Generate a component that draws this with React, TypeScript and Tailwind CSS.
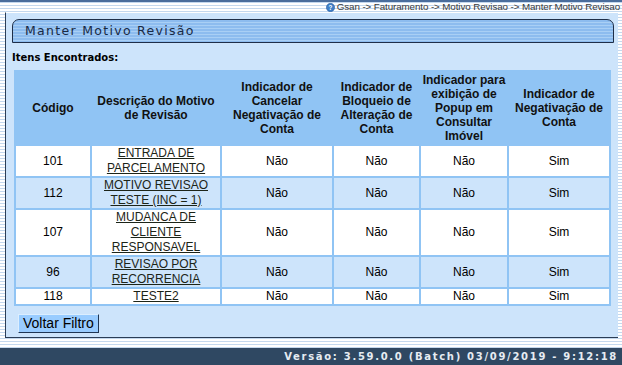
const rows = [
  { cod: "101", desc: ["ENTRADA DE", "PARCELAMENTO"], a: "Não", b: "Não", c: "Não", d: "Sim" },
  { cod: "112", desc: ["MOTIVO REVISAO", "TESTE (INC = 1)"], a: "Não", b: "Não", c: "Não", d: "Sim" },
  { cod: "107", desc: ["MUDANCA DE", "CLIENTE", "RESPONSAVEL"], a: "Não", b: "Não", c: "Não", d: "Sim" },
  { cod: "96", desc: ["REVISAO POR", "RECORRENCIA"], a: "Não", b: "Não", c: "Não", d: "Sim" },
  { cod: "118", desc: ["TESTE2"], a: "Não", b: "Não", c: "Não", d: "Sim" },
];

const HelpIcon = () => (
  <svg width="9" height="9" viewBox="0 0 10 10" className="mr-[2px]">
    <circle cx="5" cy="5" r="4.6" fill="#3f7fc8" stroke="#2a5a98" strokeWidth="0.6" />
    <text x="5" y="7.6" textAnchor="middle" fontSize="7" fontWeight="bold" fill="#fff" fontFamily="Liberation Sans, sans-serif">?</text>
  </svg>
);

const App = () => {
  return (
    <div className="w-[622px] h-[365px] overflow-hidden flex flex-col bg-[repeating-linear-gradient(180deg,#ffffff_0px,#ffffff_2px,#c4d8ee_2px,#c4d8ee_3px)] font-['Liberation_Sans',Arial,sans-serif]">
      <div className="h-[2px] bg-[#4a6d9c]" />
      <div className="h-[10px] flex items-center justify-end pr-[2px] text-[9.8px] leading-[10px] tracking-[-0.1px] text-[#3a3a3a]">
        <HelpIcon />
        <span>Gsan -&gt; Faturamento -&gt; Motivo Revisao -&gt; Manter Motivo Revisao</span>
      </div>
      <div className="ml-[5px] mr-[4px] h-[326px] bg-[#cde4fb] border-l border-b border-[#2b3d55] border-t border-t-white flex flex-col">
        <div className="mt-[6px] ml-[6px] w-[602px] h-[24px] rounded-t-[7px] border border-[#1e2e48] bg-[repeating-linear-gradient(180deg,#8dbcef_0px,#8dbcef_2px,#a9cff5_2px,#a9cff5_3px)] flex items-center pl-[12px]">
          <span className="text-[12.5px] tracking-[1.3px] text-[#1a2a44] font-['DejaVu_Sans',Verdana,sans-serif]">Manter Motivo Revisão</span>
        </div>
        <div className="mt-[7px] ml-[6px] text-[10px] font-bold text-black font-['DejaVu_Sans',Verdana,sans-serif]">Itens Encontrados:</div>
        <table className="mt-[5px] ml-[8px] w-[597px] border-separate border-spacing-[2px] bg-[#90c4f4] text-[12px] text-black table-fixed">
          <colgroup>
            <col className="w-[74px]" />
            <col className="w-[128px]" />
            <col className="w-[110px]" />
            <col className="w-[85px]" />
            <col className="w-[86px]" />
            <col className="w-[100px]" />
          </colgroup>
          <thead>
            <tr className="h-[72px]">
              <th className="font-bold leading-[14px] text-[#111]">Código</th>
              <th className="font-bold leading-[14px] text-[#111]">Descrição do Motivo<br />de Revisão</th>
              <th className="font-bold leading-[14px] text-[#111]">Indicador de<br />Cancelar<br />Negativação de<br />Conta</th>
              <th className="font-bold leading-[14px] text-[#111]">Indicador de<br />Bloqueio de<br />Alteração de<br />Conta</th>
              <th className="font-bold leading-[14px] text-[#111]">Indicador para<br />exibição de<br />Popup em<br />Consultar<br />Imóvel</th>
              <th className="font-bold leading-[14px] text-[#111]">Indicador de<br />Negativação de<br />Conta</th>
            </tr>
          </thead>
          <tbody>
            {rows.map((r, i) => (
              <tr key={r.cod} className={i % 2 === 0 ? "bg-white" : "bg-[#cde4fb]"}>
                <td className="text-center leading-[15px] py-0">{r.cod}</td>
                <td className="text-center leading-[15px] py-0">
                  <a href="#" className="underline text-[#1c2418]">
                    {r.desc.map((l, j) => (
                      <span key={j}>
                        {l}
                        {j < r.desc.length - 1 && <br />}
                      </span>
                    ))}
                  </a>
                </td>
                <td className="text-center leading-[15px]">{r.a}</td>
                <td className="text-center leading-[15px]">{r.b}</td>
                <td className="text-center leading-[15px]">{r.c}</td>
                <td className="text-center leading-[15px]">{r.d}</td>
              </tr>
            ))}
          </tbody>
        </table>
        <div className="mt-[5px] ml-[12px]">
          <button className="h-[19px] px-[4px] bg-[#99ccff] border border-[#1f3654] border-t-[#dbeeff] border-l-[#dbeeff] text-[14px] leading-[14px] text-black font-['Liberation_Sans_Narrow','Liberation_Sans',Arial,sans-serif]">
            Voltar Filtro
          </button>
        </div>
      </div>
      <div className="h-[10px]" />
      <div className="flex-1 bg-[#2f4862] flex items-center justify-end pr-[4px]">
        <span className="text-[10px] font-bold tracking-[1.7px] text-[#e6ecf2] font-['DejaVu_Sans',Verdana,sans-serif]">Versão: 3.59.0.0 (Batch) 03/09/2019 - 9:12:18</span>
      </div>
    </div>
  );
};

export default App;
